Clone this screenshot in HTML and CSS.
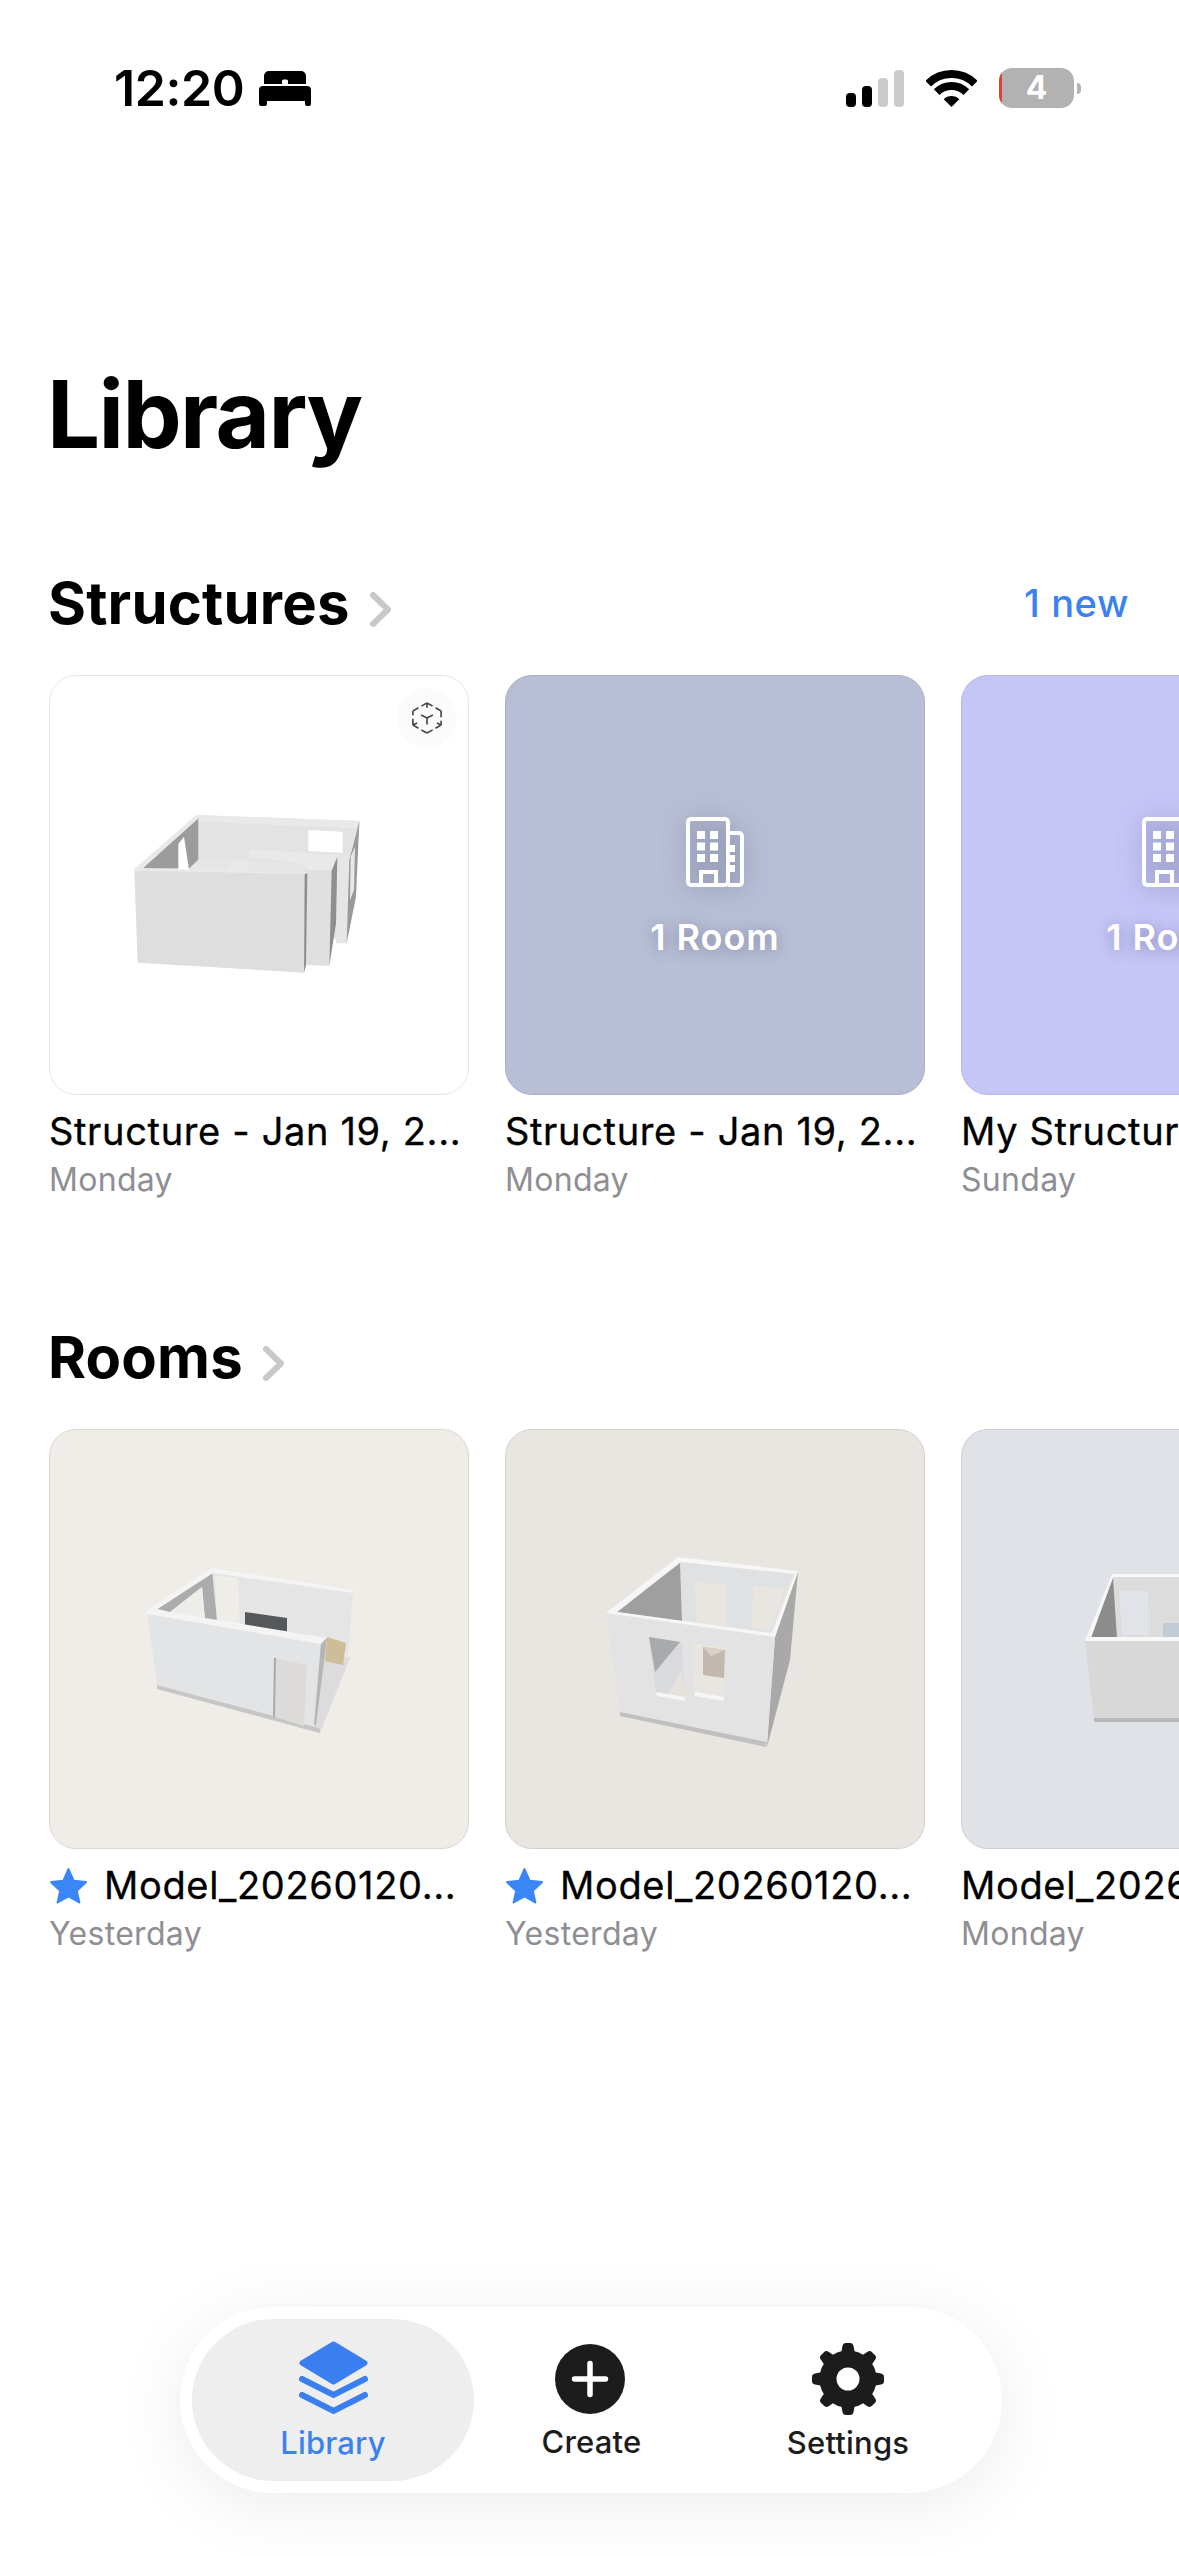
FILE: index.html
```html
<!DOCTYPE html>
<html lang="en">
<head>
<meta charset="utf-8">
<title>Library</title>
<link rel="stylesheet" href="styles.css">
</head>
<body>
<div class="screen">
  <header class="status">
    <div class="status-left">
      <span class="time">12:20</span>
      <svg class="bed" viewBox="0 0 52 35"><path d="M5 13V5a5 5 0 0 1 5-5h32a5 5 0 0 1 5 5v8H29V10a1.500 1.500 0 0 0-1.500-1.500h-3A1.500 1.500 0 0 0 23 10v3z"/><path d="M4 15h44a4 4 0 0 1 4 4v14a2 2 0 0 1-2 2h-2a2 2 0 0 1-2-2v-3H8v3a2 2 0 0 1-2 2H2a2 2 0 0 1-2-2V19a4 4 0 0 1 4-4z"/></svg>
    </div>
    <div class="status-right">
      <svg class="signal" viewBox="0 0 58 37"><rect x="0" y="23" width="10" height="14" rx="4"/><rect x="16" y="16" width="10" height="21" rx="4"/><rect class="off" x="32" y="8" width="10" height="29" rx="4"/><rect class="off" x="48" y="0" width="10" height="37" rx="4"/></svg>
      <svg class="wifi" viewBox="0 0 51 37"><path class="arc" d="M2.200 13.700A33 33 0 0 1 48.800 13.700"/><path class="arc" d="M10.650 22.150A21 21 0 0 1 40.350 22.150"/><path d="M25.500 37L17.700 29.200A11 11 0 0 1 33.300 29.200Z"/></svg>
      <div class="battery-wrap">
        <div class="battery">4</div>
        <span class="battery-tip"></span>
      </div>
    </div>
  </header>

  <h1 class="page-title">Library</h1>

  <section class="section">
    <div class="section-head">
      <div class="section-name">
        <h2>Structures</h2>
        <svg class="chev" viewBox="0 0 21 35"><path d="M3 3L18 17.500L3 32"/></svg>
      </div>
      <a class="new-link">1 new</a>
    </div>
    <div class="row">
      <article class="item">
        <div class="thumb thumb-white">
          <svg class="model" viewBox="57 45 1260 1260">
            <path fill="#e3e3e3" d="M498 465L990 483L950 850L340 630Z"/>
            <path fill="#fff" d="M835 510L938 515L938 578L835 573Z"/>
            <path fill="#e9e9e9" d="M498 465L990 483L975 505L505 485Z"/>
            <path fill="#9c9c9c" d="M338 625L505 475L505 625Z"/>
            <path fill="#fff" d="M445 552L462 530L477 630L445 630Z"/>
            <path fill="#e6e6e6" d="M478 625L510 594L820 612L820 640L478 640Z"/>
            <path fill="#e9e9e9" d="M660 568L925 585L905 632L830 630L820 612L660 590Z"/>
            <path fill="#e9e9e9" d="M595 632L612 600L655 602L655 632Z"/>
            <path fill="#e6e6e6" d="M920 588L958 580L950 850L918 850Z"/>
            <path fill="#999" d="M958 600L988 485L978 710L950 850Z"/>
            <path fill="#e8e8e8" d="M962 590L975 560L972 690L960 720Z"/>
            <path fill="#e0e0e0" d="M830 632L906 632L898 918L826 915Z"/>
            <path fill="#8f8f8f" d="M905 632L922 590L918 790L898 918Z"/>
            <path fill="#e9e9e9" d="M313 627L498 465L505 475L338 625L830 640L830 645L313 632Z"/>
            <path fill="#dedede" d="M313 632L828 642L822 938L323 908Z"/>
            <path fill="#8e8e8e" d="M824 642L832 640L828 915L822 938Z"/>
          </svg>
          <div class="badge-3d">
            <svg viewBox="0 0 34 36">
              <path class="cube cube-edge" d="M17 2L32 10.500M32 10.500V25.500M32 25.500L17 34M17 34L2 25.500M2 25.500V10.500M2 10.500L17 2"/>
              <path class="cube cube-spoke" d="M17 2V18M32 25.500L17 18M2 25.500L17 18"/>
              <path class="cube cube-y" d="M17 18L2 10.500M17 18L32 10.500M17 18V34"/>
            </svg>
          </div>
        </div>
        <div class="item-title">Structure - Jan 19, 2...</div>
        <div class="item-date">Monday</div>
      </article>
      <article class="item">
        <div class="thumb thumb-slate">
          <svg class="building" viewBox="0 0 59 70"><use href="#bld"/></svg>
          <span class="count">1 Room</span>
        </div>
        <div class="item-title">Structure - Jan 19, 2...</div>
        <div class="item-date">Monday</div>
      </article>
      <article class="item">
        <div class="thumb thumb-violet">
          <svg class="building" viewBox="0 0 59 70"><use href="#bld"/></svg>
          <span class="count">1 Room</span>
        </div>
        <div class="item-title">My Structure</div>
        <div class="item-date">Sunday</div>
      </article>
    </div>
  </section>

  <section class="section section-rooms">
    <div class="section-head">
      <div class="section-name">
        <h2>Rooms</h2>
        <svg class="chev" viewBox="0 0 21 35"><path d="M3 3L18 17.500L3 32"/></svg>
      </div>
    </div>
    <div class="row">
      <article class="item">
        <div class="thumb thumb-warm">
          <svg class="model" viewBox="49 1429 420 420">
            <path fill="#dcdcde" d="M350 1658L320 1733L300 1728L325 1650Z"/>
            <path fill="#e5e5e6" d="M212 1570L353 1592L348 1655L300 1640L217 1621Z"/>
            <path fill="#efede8" d="M215 1576L238 1578L240 1625L217 1620Z"/>
            <path fill="#acacac" d="M154 1608L212 1570L217 1621L205 1620L202 1587L170 1612Z"/>
            <path fill="#efede8" d="M170 1612L202 1587L205 1619L190 1616Z"/>
            <path fill="#55585b" d="M245 1612L287 1618L287 1637L245 1627Z"/>
            <path fill="#d9c9a9" d="M292 1632L320 1637L318 1643L292 1637Z"/>
            <path fill="#cfbc98" d="M327 1637L346 1643L343 1665L325 1661Z"/>
            <path fill="#e3e4e5" d="M147 1612L322 1642L315 1727L157 1685Z"/>
            <path fill="#c6c6c6" d="M157 1685L315 1727L320 1729L320 1733L157 1689Z"/>
            <path fill="#dcdbda" d="M275 1658L307 1665L304 1726L275 1717Z"/>
            <path fill="#a9a9a9" d="M274 1658L276 1658L275 1717L273 1717Z"/>
            <path fill="#b5b5b5" d="M321 1643L327 1638L316 1725L314 1725Z"/>
            <path fill="#f4f4f4" d="M147 1610L212 1568L353 1590L353 1593L213 1573L156 1610L322 1637L327 1637L321 1644L147 1614Z"/>
          </svg>
        </div>
        <div class="item-title"><svg class="star" viewBox="0 0 37 35"><path d="M18.500 2L23.400 13.100L35 14.300L26.300 22.400L28.800 33.500L18.500 27.700L8.200 33.500L10.700 22.400L2 14.300L13.600 13.100Z"/></svg>Model_20260120...</div>
        <div class="item-date">Yesterday</div>
      </article>
      <article class="item">
        <div class="thumb thumb-stone">
          <svg class="model" viewBox="505 1429 420 420">
            <path fill="#e0e1e2" d="M680 1559L795 1570L770 1633L682 1620Z"/>
            <path fill="#e9e6e1" d="M695 1582L727 1585L727 1627L696 1622Z"/>
            <path fill="#e9e6e1" d="M753 1586L785 1589L770 1630L752 1628Z"/>
            <path fill="#9f9f9f" d="M617 1612L680 1563L682 1621Z"/>
            <path fill="#c0c0c0" d="M620 1711L767 1741L766 1747L620 1716Z"/>
            <path fill="#a9a9a9" d="M798 1572L775 1637L767 1747L790 1660Z"/>
            <path fill-rule="evenodd" fill="#e3e3e4" d="M606 1613L775 1637L767 1742L620 1712ZM649 1637L656 1692L685 1697L682 1642ZM692 1643L695 1692L724 1697L725 1648Z"/>
            <path fill="#d8dadd" d="M649 1637L682 1642L685 1697L656 1692Z"/>
            <path fill="#a8aaac" d="M649 1637L680 1642L655 1672Z"/>
            <path fill="#e6e3dd" d="M668 1694L682 1670L685 1697Z"/>
            <path fill="#e9e6e1" d="M692 1643L725 1648L724 1697L695 1692Z"/>
            <path fill="#c2b8ae" d="M703 1647L725 1650L724 1678L703 1675Z"/>
            <path fill="#d9d0c7" d="M703 1647L725 1650L711 1656Z"/>
            <path fill="#f6f6f6" d="M656 1692L685 1697L685 1701L657 1696Z"/>
            <path fill="#f6f6f6" d="M695 1692L724 1697L724 1701L695 1696Z"/>
            <path fill="#f6f6f6" fill-rule="evenodd" d="M606 1613L678 1557L798 1571L775 1637ZM617 1612L772 1633L795 1574L680 1562Z"/>
          </svg>
        </div>
        <div class="item-title"><svg class="star" viewBox="0 0 37 35"><path d="M18.500 2L23.400 13.100L35 14.300L26.300 22.400L28.800 33.500L18.500 27.700L8.200 33.500L10.700 22.400L2 14.300L13.600 13.100Z"/></svg>Model_20260120...</div>
        <div class="item-date">Yesterday</div>
      </article>
      <article class="item">
        <div class="thumb thumb-cool">
          <svg class="model" viewBox="961 1429 420 420">
            <path fill="#dcdcdc" d="M1112 1574L1330 1574L1330 1640L1117 1640Z"/>
            <path fill="#8c8c8c" d="M1091 1638L1113 1578L1117 1638Z"/>
            <path fill="#e0e3e8" d="M1119 1591L1148 1591L1149 1635L1122 1635Z"/>
            <path fill="#c3ccd6" d="M1163 1623L1200 1623L1200 1637L1163 1637Z"/>
            <path fill="#d8d8d8" d="M1085 1640L1330 1640L1320 1720L1094 1720Z"/>
            <path fill="#b9b9b9" d="M1094 1718L1320 1718L1320 1722L1094 1722Z"/>
            <path fill="#f8f8f8" fill-rule="evenodd" d="M1085 1641L1112 1574L1340 1574L1330 1641ZM1091 1637L1330 1637L1335 1577L1113 1577Z"/>
          </svg>
        </div>
        <div class="item-title">Model_20260120...</div>
        <div class="item-date">Monday</div>
      </article>
    </div>
  </section>

  <nav class="tabbar">
    <a class="tab tab-active">
      <svg class="tab-icon" viewBox="0 0 69 76"><path class="lay-top" d="M34.500 3L66 22L34.500 41L3 22Z"/><path class="lay-line" d="M3 38L34.500 54L66 38"/><path class="lay-line" d="M3 54L34.500 70L66 54"/></svg>
      <span>Library</span>
    </a>
    <a class="tab tab-create">
      <svg class="tab-icon" viewBox="0 0 70 70"><circle cx="35" cy="35" r="35" fill="#1c1c1c"/><path class="plus" d="M35 19.500V50.500M19.500 35H50.500"/></svg>
      <span>Create</span>
    </a>
    <a class="tab tab-settings">
      <svg class="tab-icon" viewBox="0 0 72 72">
        <defs><path id="tooth" d="M28 16L30.500 3Q31 0 34 0H38Q41 0 41.500 3L44 16Z"/></defs>
        <circle cx="36" cy="36" r="20" fill="none" stroke="#1c1c1c" stroke-width="17"/>
        <g fill="#1c1c1c">
          <use href="#tooth"/>
          <use href="#tooth" transform="rotate(45 36 36)"/>
          <use href="#tooth" transform="rotate(90 36 36)"/>
          <use href="#tooth" transform="rotate(135 36 36)"/>
          <use href="#tooth" transform="rotate(180 36 36)"/>
          <use href="#tooth" transform="rotate(225 36 36)"/>
          <use href="#tooth" transform="rotate(270 36 36)"/>
          <use href="#tooth" transform="rotate(315 36 36)"/>
        </g>
      </svg>
      <span>Settings</span>
    </a>
  </nav>

  <svg class="defs" width="0" height="0">
    <defs>
      <g id="bld">
        <path fill="#7b83a3" fill-opacity=".14" d="M42 16H56V68H42Z"/>
        <rect x="2" y="2" width="40" height="66" rx="3" fill="#6d7696" fill-opacity=".1" stroke="#fff" stroke-width="4"/>
        <path d="M42 16h11a3 3 0 0 1 3 3v46a3 3 0 0 1-3 3H42" fill="none" stroke="#fff" stroke-width="4"/>
        <g fill="#fff">
          <rect x="11" y="14" width="8" height="8"/><rect x="24" y="14" width="8" height="8"/>
          <rect x="11" y="25.500" width="8" height="8"/><rect x="24" y="25.500" width="8" height="8"/>
          <rect x="11" y="37" width="8" height="8"/><rect x="24" y="37" width="8" height="8"/>
          <rect x="43" y="28" width="6" height="7"/><rect x="43" y="38" width="6" height="7"/><rect x="43" y="48" width="6" height="7"/>
        </g>
        <path d="M15 68V55h15v13" fill="none" stroke="#fff" stroke-width="4"/>
      </g>
    </defs>
  </svg>
</div>
</body>
</html>
```
FILE: styles.css
```css
* { box-sizing: border-box; }
html, body { margin: 0; padding: 0; background: #fff; }
body { font-family: Inter, "Liberation Sans", sans-serif; color: #000; overflow: hidden; }
.screen { position: relative; width: 1179px; height: 2556px; overflow: hidden; background: #fff; }

.status { height: 176px; padding: 0 98px 0 114px; display: flex; justify-content: space-between; align-items: center; }
.status-left { display: flex; align-items: center; gap: 15px; }
.time { font-size: 50px; line-height: 60px; font-weight: 600; letter-spacing: -0.4px; }
.bed { width: 52px; height: 35px; fill: #000; }
.status-right { display: flex; align-items: center; gap: 22px; }
.signal { width: 58px; height: 37px; fill: #000; }
.signal .off { fill: #cbcbcb; }
.wifi { width: 51px; height: 37px; fill: #000; }
.wifi .arc { fill: none; stroke: #000; stroke-width: 8; }
.battery-wrap { display: flex; align-items: center; gap: 3px; }
.battery { position: relative; width: 75px; height: 40px; border-radius: 13px; background: #b2b2b2; color: #fff; font-size: 32px; line-height: 40px; font-weight: 700; text-align: center; overflow: hidden; }
.battery::before { content: ""; position: absolute; left: 0; top: 0; bottom: 0; width: 3px; background: #e0403a; }
.battery-tip { width: 4px; height: 11px; background: #b2b2b2; border-radius: 0 5px 5px 0; }

.page-title { margin: 183px 0 0; padding-left: 47px; font-size: 94px; line-height: 110px; font-weight: 700; letter-spacing: -1.6px; }

.section { margin-top: 99px; }
.section-rooms { margin-top: 123px; }
.section-head { height: 70px; padding: 0 50px 0 48px; display: flex; justify-content: space-between; align-items: center; }
.section-name { display: flex; align-items: center; gap: 20px; }
.section-name h2 { margin: 0; font-size: 58px; line-height: 70px; font-weight: 700; letter-spacing: 0.2px; }
.chev { width: 21px; height: 35px; margin-top: 12px; }
.chev path { fill: none; stroke: #c8c8c8; stroke-width: 6; stroke-linecap: round; stroke-linejoin: round; }
.new-link { color: #3a82f0; font-size: 38px; line-height: 44px; font-weight: 500; letter-spacing: 0.6px; }

.row { display: flex; gap: 36px; margin-top: 37px; padding-left: 49px; width: 1600px; }
.item { width: 420px; flex: none; }
.thumb { position: relative; width: 420px; height: 420px; border-radius: 27px; border: 1.5px solid rgba(0,0,0,.1); overflow: hidden; display: flex; flex-direction: column; align-items: center; justify-content: center; }
.thumb-white { background: #fff; border-color: #e6e6e6; }
.thumb-slate { background: #b8bed5; border-color: #a9afc6; padding-top: 4px; }
.thumb-violet { background: #c5c5f8; border-color: #b6b6e8; padding-top: 4px; }
.thumb-warm { background: #f0ede8; border-color: #dbd8d3; }
.thumb-stone { background: #e9e6e1; border-color: #d5d2cd; }
.thumb-cool { background: #dfe2e7; border-color: #cccfd4; }
.model { position: absolute; left: -1.5px; top: -1.5px; width: 420px; height: 420px; }

.badge-3d { position: absolute; top: 12px; right: 11px; width: 60px; height: 60px; border-radius: 50%; background: #fbfbfb; display: flex; align-items: center; justify-content: center; }
.badge-3d svg { width: 32px; height: 34px; }
.cube { fill: none; stroke: #4a4a4a; stroke-width: 1.800; }
.cube-edge { stroke-dasharray: 6.800 3.600 6.800 0; }
.cube-spoke { stroke-dasharray: 5 40; }
.cube-y { stroke-dasharray: 7 40; }

.building { width: 59px; height: 70px; filter: drop-shadow(0 2px 12px rgba(70,78,110,.4)); }
.count { margin-top: 30px; color: #fff; font-size: 36px; line-height: 40px; font-weight: 600; letter-spacing: 1px; text-shadow: 0 2px 14px rgba(70,78,110,.45); }

.item-title { margin-top: 14px; height: 44px; display: flex; align-items: center; gap: 16px; font-size: 38px; line-height: 44px; font-weight: 400; letter-spacing: 0.65px; white-space: nowrap; -webkit-text-stroke: .3px #000; }
.star { width: 39px; height: 37px; fill: #3b86f7; stroke: #3b86f7; stroke-width: 2; stroke-linejoin: round; flex: none; }
.item-date { margin-top: 8px; font-size: 32px; line-height: 38px; letter-spacing: 0.3px; color: #8e8e93; white-space: nowrap; }

.tabbar { position: absolute; left: 180px; top: 2307px; width: 822px; height: 186px; padding: 12px; border-radius: 93px; background: #fff; box-shadow: 0 12px 70px rgba(0,0,0,.08); display: flex; }
.tab { display: flex; flex-direction: column; align-items: center; padding-top: 25px; color: #1c1c1c; font-size: 31px; line-height: 36px; font-weight: 500; letter-spacing: 0.2px; }
.tab-active { width: 282px; height: 162px; padding-top: 22px; border-radius: 81px; background: #eeeeee; color: #3a82f0; }
.tab-active span { margin-top: 8px; }
.tab-create { width: 232px; }
.tab-settings { width: 284px; }
.tab-create span, .tab-settings span { margin-top: 10px; }
.tab-create span { margin-left: 3px; }
.tab-icon { display: block; }
.tab-active .tab-icon { width: 69px; height: 76px; }
.tab-create .tab-icon { width: 70px; height: 70px; }
.tab-settings .tab-icon { width: 72px; height: 72px; margin-top: -1px; }
.lay-top { fill: #3a7ff0; stroke: #3a7ff0; stroke-width: 5; stroke-linejoin: round; }
.lay-line { fill: none; stroke: #3a7ff0; stroke-width: 6; stroke-linecap: round; stroke-linejoin: miter; }
.plus { fill: none; stroke: #fff; stroke-width: 5.500; stroke-linecap: round; }
.defs { position: absolute; }
```
